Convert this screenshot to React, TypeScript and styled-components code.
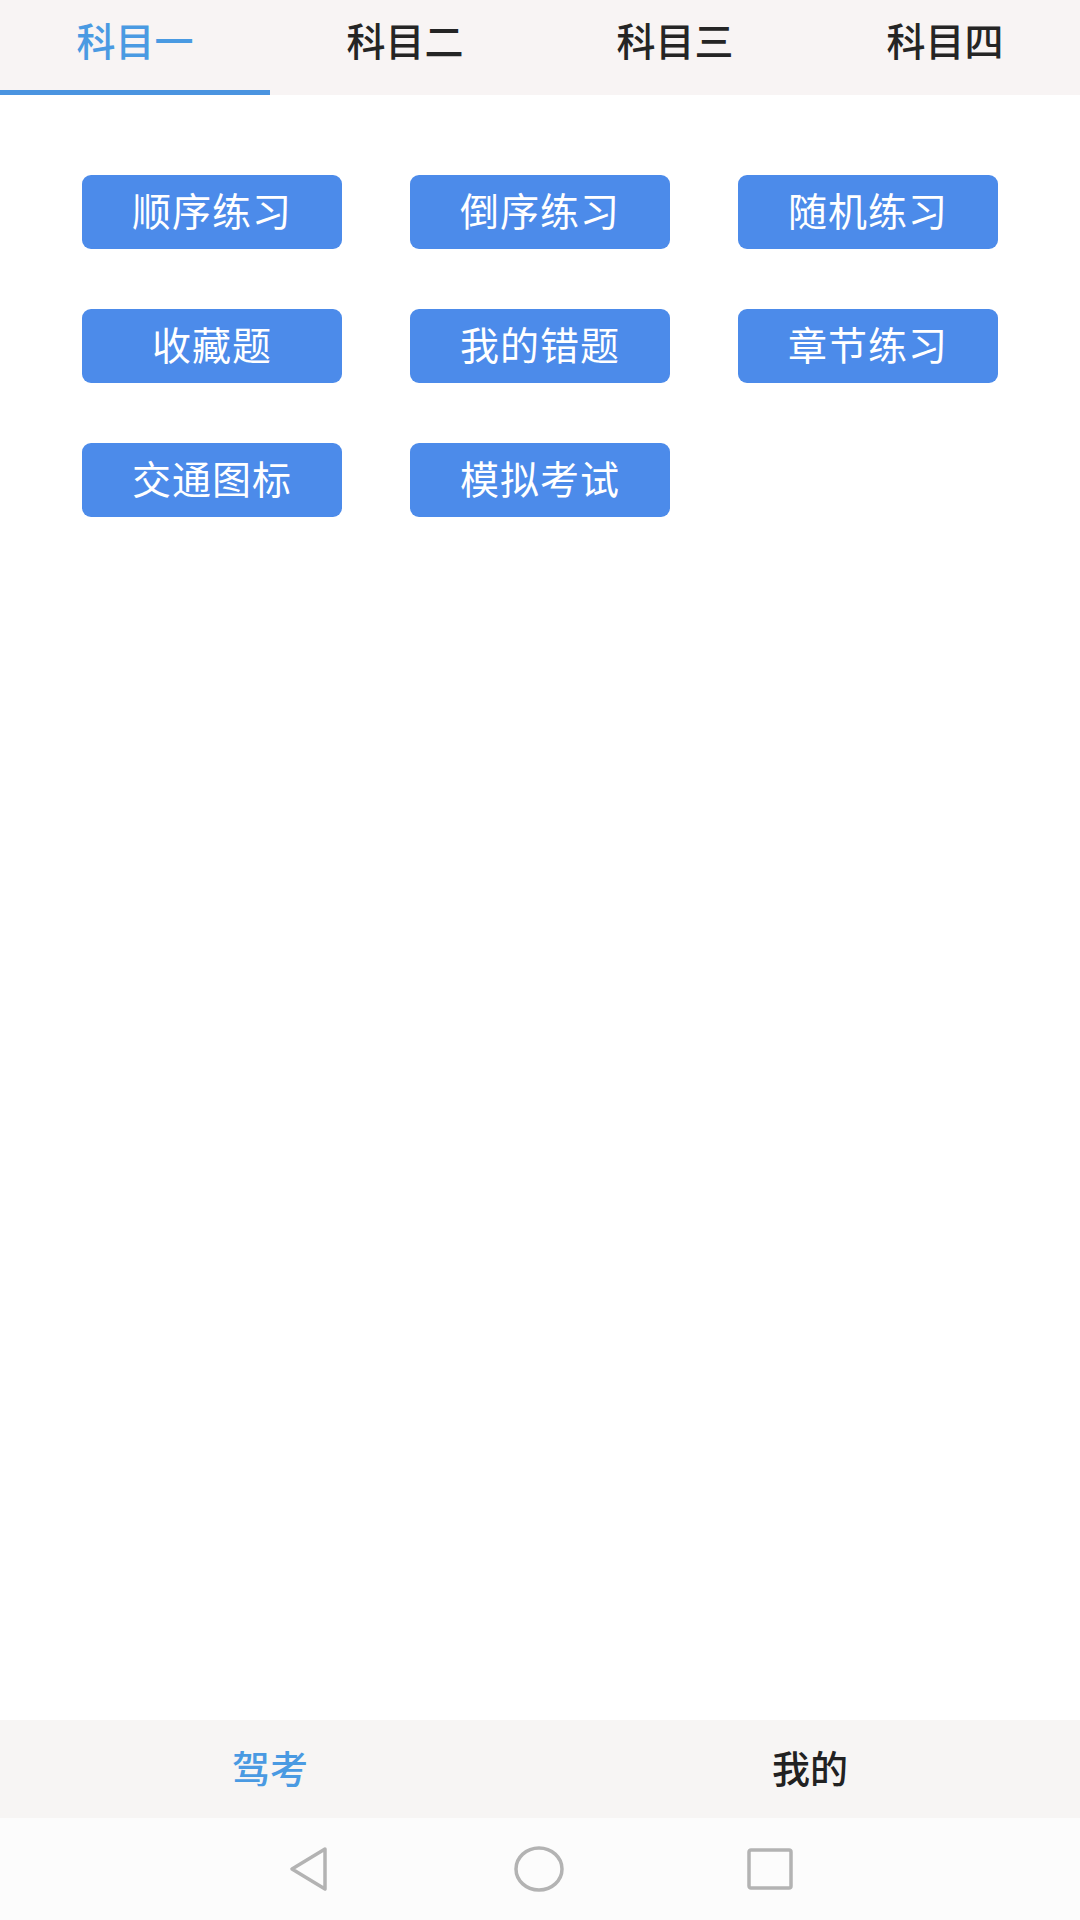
import styled, { createGlobalStyle } from 'styled-components';

const GlobalStyle = createGlobalStyle`
  html, body {
    margin: 0;
    padding: 0;
    background: #ffffff;
  }

  body {
    font-family: "Noto Sans CJK SC", "Noto Sans", sans-serif;
  }
`;

const StyledPage = styled.div`
  display: flex;
  flex-direction: column;
  width: 1080px;
  height: 1920px;
  background: #ffffff;
`;

const StyledTabBar = styled.nav`
  display: grid;
  grid-template-columns: repeat(4, 1fr);
  height: 95px;
  background: #f8f4f4;
`;

const StyledTab = styled.div<{ $active?: boolean }>`
  display: flex;
  align-items: center;
  justify-content: center;
  box-sizing: border-box;
  height: 95px;
  padding-bottom: 12px;
  border-bottom: 5px solid ${({ $active }) => ($active ? '#4a94e0' : 'transparent')};
  color: ${({ $active }) => ($active ? '#4a9ae2' : '#252525')};
  font-size: 39px;
  font-weight: 500;
  line-height: 1;
`;

const StyledContent = styled.main`
  flex: 1;
  padding: 80px 82px 0;
`;

const StyledGrid = styled.div`
  display: grid;
  grid-template-columns: repeat(3, 260px);
  column-gap: 68px;
  row-gap: 60px;
`;

const StyledButton = styled.button`
  display: flex;
  align-items: center;
  justify-content: center;
  box-sizing: border-box;
  height: 74px;
  padding: 0 0 6px;
  border: none;
  border-radius: 9px;
  background: #4c8bea;
  color: #ffffff;
  font-family: "Noto Sans CJK SC", "Noto Sans", sans-serif;
  font-size: 39px;
  font-weight: 400;
  line-height: 1;
  letter-spacing: 1px;
`;

const StyledBottomNav = styled.nav`
  display: grid;
  grid-template-columns: 1fr 1fr;
  height: 98px;
  background: #f7f5f4;
`;

const StyledNavItem = styled.div<{ $active?: boolean }>`
  display: flex;
  align-items: center;
  justify-content: center;
  padding-bottom: 4px;
  color: ${({ $active }) => ($active ? '#4a9ae2' : '#222222')};
  font-size: 38px;
  font-weight: 500;
  line-height: 1;
`;

const StyledSystemBar = styled.div`
  display: flex;
  align-items: center;
  justify-content: center;
  gap: 182px;
  height: 102px;
  background: #fcfcfc;
`;

const StyledSysIcon = styled.svg`
  display: block;
`;

const tabs = ['科目一', '科目二', '科目三', '科目四'];

const actions = [
  '顺序练习',
  '倒序练习',
  '随机练习',
  '收藏题',
  '我的错题',
  '章节练习',
  '交通图标',
  '模拟考试',
];

const App = (): JSX.Element => (
  <StyledPage>
    <GlobalStyle />
    <StyledTabBar>
      {tabs.map((tab, i) => (
        <StyledTab key={tab} $active={i === 0}>
          {tab}
        </StyledTab>
      ))}
    </StyledTabBar>

    <StyledContent>
      <StyledGrid>
        {actions.map((label) => (
          <StyledButton key={label}>{label}</StyledButton>
        ))}
      </StyledGrid>
    </StyledContent>

    <StyledBottomNav>
      <StyledNavItem $active>驾考</StyledNavItem>
      <StyledNavItem>我的</StyledNavItem>
    </StyledBottomNav>

    <StyledSystemBar>
      {/* back */}
      <StyledSysIcon width="44" height="46" viewBox="0 0 44 46">
        <path
          d="M38 3 L5 23 L38 43 Z"
          fill="none"
          stroke="#b3b3b3"
          strokeWidth="3.5"
          strokeLinejoin="round"
        />
      </StyledSysIcon>
      {/* home */}
      <StyledSysIcon width="52" height="46" viewBox="0 0 52 46">
        <ellipse cx="26" cy="23" rx="23" ry="21" fill="none" stroke="#b3b3b3" strokeWidth="3.5" />
      </StyledSysIcon>
      {/* recents */}
      <StyledSysIcon width="46" height="42" viewBox="0 0 46 42">
        <rect x="2" y="2" width="42" height="38" rx="2" fill="none" stroke="#b3b3b3" strokeWidth="3.5" />
      </StyledSysIcon>
    </StyledSystemBar>
  </StyledPage>
);

export default App;
